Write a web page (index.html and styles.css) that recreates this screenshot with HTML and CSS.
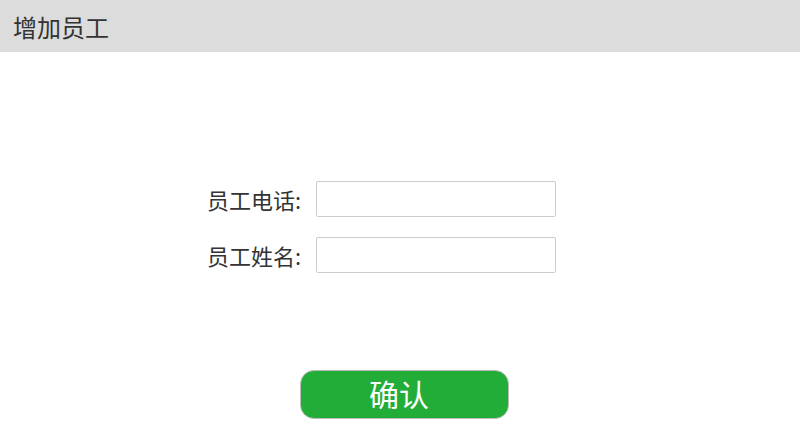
FILE: index.html
```html
<!DOCTYPE html>
<html lang="zh-CN">
<head>
    <meta charset="UTF-8">
    <title>增加员工</title>
    <meta name="viewport" content="width=device-width, initial-scale=1.0">
    <link rel="stylesheet" href="styles.css">
</head>
<body>
    <div class="header">增加员工</div>

    <div class="form">
        <div class="form-row">
            <label for="phone">员工电话:</label>
            <input type="text" id="phone">
        </div>
        <div class="form-row">
            <label for="name">员工姓名:</label>
            <input type="text" id="name">
        </div>
    </div>

    <div class="actions">
        <button class="confirm-button">确认</button>
    </div>
</body>
</html>
```

FILE: styles.css
```css
body {
    font-family: "Noto Sans CJK SC", "Noto Sans", sans-serif;
    margin: 0;
    padding: 0;
    background-color: #ffffff;
    color: #333;
}

.header {
    height: 52px;
    line-height: 53px;
    padding-left: 13px;
    background-color: #dcdcdc;
    font-size: 24px;
    color: #333;
}

.form {
    width: 400px;
    margin: 129px auto 0;
    display: flex;
    flex-direction: column;
    gap: 20px;
}

.form-row {
    display: flex;
    align-items: center;
    gap: 15px;
}

.form-row label {
    width: 101px;
    text-align: right;
    font-size: 22px;
    line-height: 30px;
    color: #333;
    white-space: nowrap;
}

.form-row input {
    width: 240px;
    height: 36px;
    box-sizing: border-box;
    border: 1px solid #ccc;
    border-radius: 2px;
    padding: 0 6px;
    font-size: 16px;
}

.actions {
    display: flex;
    justify-content: center;
    padding-left: 8px;
    margin-top: 97px;
}

.confirm-button {
    width: 209px;
    height: 49px;
    padding: 0 10px 4px 0;
    border: 1px solid #bbb;
    border-radius: 14px;
    background-color: #22ad38;
    color: white;
    font-family: "Noto Sans CJK SC", sans-serif;
    font-size: 30px;
    line-height: 1;
    cursor: pointer;
}
```
